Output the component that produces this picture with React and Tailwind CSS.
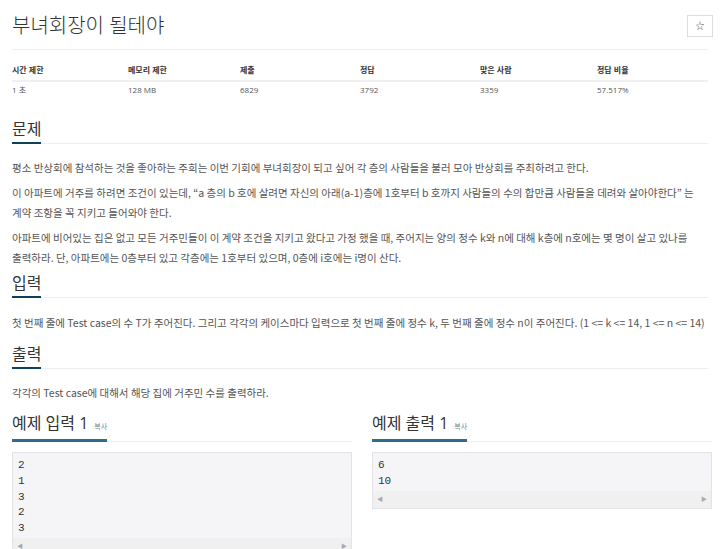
import React from 'react';

const font = { fontFamily: '"Open Sans", "Noto Sans CJK KR", sans-serif' };
const bodyFont = { fontFamily: '"Noto Sans CJK KR", Lato, sans-serif' };

const stats = [
  ['시간 제한', '1 초'],
  ['메모리 제한', '128 MB'],
  ['제출', '6829'],
  ['정답', '3792'],
  ['맞은 사람', '3359'],
  ['정답 비율', '57.517%'],
];

function Heading({ children }) {
  return (
    <div className="flex border-b border-[#eeeeee]">
      <h2 className="text-[16px] leading-[20px] text-[#333] pb-[3px] border-b-2 border-[#0e3f5c] -mb-px">{children}</h2>
    </div>
  );
}

function ScrollBar() {
  return (
    <div className="h-[17px] bg-[#f0f0f0] flex items-center justify-between px-[4px] text-[6px] text-[#aaa]">
      <span>◀</span>
      <span>▶</span>
    </div>
  );
}

function Sample({ title, lines, className }) {
  return (
    <div className={className}>
      <div className="flex border-b border-[#eeeeee]">
        <h2 className="text-[16px] leading-[20px] text-[#333] pb-[2px] border-b-[3px] border-[#2d6e8e] -mb-px flex items-baseline">
          {title}
          <span className="text-[7px] text-[#6a8ba0] ml-[6px]">복사</span>
        </h2>
      </div>
      <div className="mt-[10px] bg-[#f5f5f7] border border-[#e3e3e8]">
        <pre
          className="px-[5px] pt-[5px] pb-[1px] text-[11px] leading-[15.8px] text-[#333]"
          style={{ fontFamily: '"Liberation Mono", "DejaVu Sans Mono", monospace' }}
        >
          {lines.join('\n')}
        </pre>
        <ScrollBar />
      </div>
    </div>
  );
}

export default function App() {
  return (
    <div className="w-[720px] h-[549px] overflow-hidden bg-white px-[12px]" style={font}>
      <div className="flex items-center justify-between pt-[14px] pb-[11px] border-b border-[#f0f0f0]">
        <h1 className="text-[20px] leading-[24px] text-[#333] font-light">부녀회장이 될테야</h1>
        <div className="w-[26px] h-[22px] border border-[#dddddd] flex items-center justify-center text-[9px] text-[#555] -mr-[5px]">
          ☆
        </div>
      </div>

      <div className="mt-[14px]">
        <div className="grid grid-cols-[116px_112px_120px_120px_117px_1fr] text-[8px] font-semibold text-[#333] pb-[4px] border-b-2 border-[#f0f0f0]">
          {stats.map(([k]) => (
            <div key={k}>{k}</div>
          ))}
        </div>
        <div className="grid grid-cols-[116px_112px_120px_120px_117px_1fr] text-[8px] text-[#555] pt-[2px]">
          {stats.map(([k, v]) => (
            <div key={k}>{v}</div>
          ))}
        </div>
      </div>

      <div className="mt-[23px]">
        <Heading>문제</Heading>
        <div className="mt-[14px] text-[10.5px] leading-[20px] text-[#555] space-y-[5px] break-keep" style={bodyFont}>
          <p>평소 반상회에 참석하는 것을 좋아하는 주희는 이번 기회에 부녀회장이 되고 싶어 각 층의 사람들을 불러 모아 반상회를 주최하려고 한다.</p>
          <p>
            이 아파트에 거주를 하려면 조건이 있는데, “a 층의 b 호에 살려면 자신의 아래(a-1)층에 1호부터 b 호까지 사람들의 수의 합만큼 사람들을 데려와 살아야한다” 는
            계약 조항을 꼭 지키고 들어와야 한다.
          </p>
          <p>
            아파트에 비어있는 집은 없고 모든 거주민들이 이 계약 조건을 지키고 왔다고 가정 했을 때, 주어지는 양의 정수 k와 n에 대해 k층에 n호에는 몇 명이 살고 있나를
            출력하라. 단, 아파트에는 0층부터 있고 각층에는 1호부터 있으며, 0층에 i호에는 i명이 산다.
          </p>
        </div>
      </div>

      <div className="mt-[5px]">
        <Heading>입력</Heading>
        <p className="mt-[15px] text-[10.5px] leading-[20px] text-[#555] whitespace-nowrap" style={bodyFont}>
          첫 번째 줄에 Test case의 수 T가 주어진다. 그리고 각각의 케이스마다 입력으로 첫 번째 줄에 정수 k, 두 번째 줄에 정수 n이 주어진다. (1 &lt;= k &lt;= 14, 1 &lt;= n &lt;= 14)
        </p>
      </div>

      <div className="mt-[11px]">
        <Heading>출력</Heading>
        <p className="mt-[14px] text-[10.5px] leading-[20px] text-[#555]" style={bodyFont}>
          각각의 Test case에 대해서 해당 집에 거주민 수를 출력하라.
        </p>
      </div>

      <div className="mt-[10px] grid grid-cols-2 gap-[20px] mr-[-4px]">
        <Sample title="예제 입력 1" lines={['2', '1', '3', '2', '3']} />
        <Sample title="예제 출력 1" lines={['6', '10']} className="self-start" />
      </div>
    </div>
  );
}
